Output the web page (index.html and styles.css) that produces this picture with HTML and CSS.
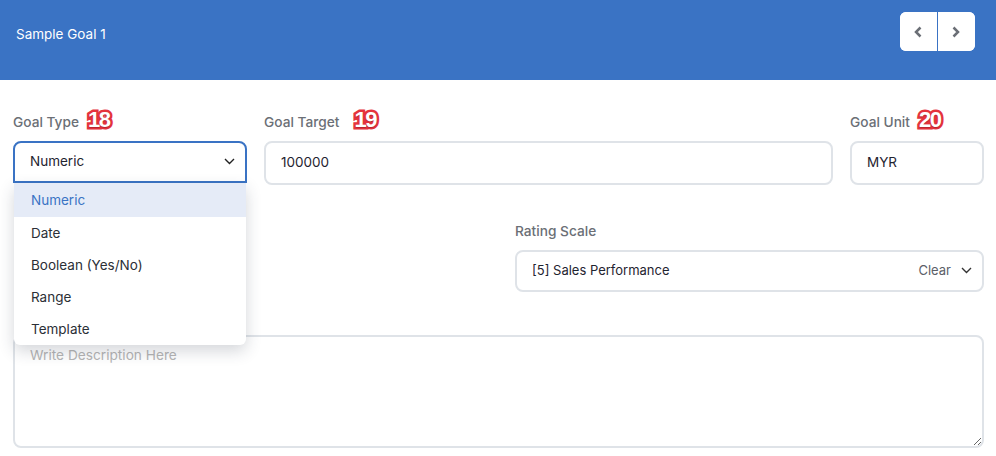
FILE: index.html
```html
<!DOCTYPE html>
<html lang="en">
<head>
<meta charset="utf-8">
<title>Sample Goal 1</title>
<link rel="stylesheet" href="styles.css">
</head>
<body>
<header class="topbar">
  <span class="title">Sample Goal 1</span>
  <div class="pager">
    <button class="page-btn page-prev" aria-label="Previous"><svg width="10" height="12" viewBox="0 0 10 12"><path d="M7.5 1.5 3 6l4.500 4.500" fill="none" stroke="#6b6f76" stroke-width="2.500"/></svg></button>
    <button class="page-btn" aria-label="Next"><svg width="10" height="12" viewBox="0 0 10 12"><path d="M2.500 1.500 7 6l-4.500 4.500" fill="none" stroke="#6b6f76" stroke-width="2.500"/></svg></button>
  </div>
</header>
<main class="form">
  <div class="row row-top">
    <div class="field field-type">
      <div class="label-line"><label class="label">Goal Type</label><span class="badge">18</span></div>
      <div class="control control-focus">
        <span>Numeric</span>
        <svg class="chev" width="11" height="7" viewBox="0 0 11 7"><path d="M1 1l4.500 4.500L10 1" fill="none" stroke="#222" stroke-width="1.400"/></svg>
      </div>
      <ul class="menu">
        <li class="menu-item menu-active">Numeric</li>
        <li class="menu-item">Date</li>
        <li class="menu-item">Boolean (Yes/No)</li>
        <li class="menu-item">Range</li>
        <li class="menu-item">Template</li>
      </ul>
    </div>
    <div class="field field-target">
      <div class="label-line"><label class="label">Goal Target</label><span class="badge badge-wide">19</span></div>
      <div class="control">100000</div>
    </div>
    <div class="field field-unit">
      <div class="label-line"><label class="label">Goal Unit</label><span class="badge">20</span></div>
      <div class="control">MYR</div>
    </div>
  </div>
  <div class="row row-rating">
    <div class="field field-rating">
      <label class="label label-plain">Rating Scale</label>
      <div class="control control-rating">
        <span>[5] Sales Performance</span>
        <span class="actions"><span class="clear">Clear</span><svg width="11" height="7" viewBox="0 0 11 7"><path d="M1 1l4.500 4.500L10 1" fill="none" stroke="#333" stroke-width="1.400"/></svg></span>
      </div>
    </div>
  </div>
  <textarea class="desc" placeholder="Write Description Here"></textarea>
</main>
</body>
</html>
```
FILE: styles.css
```css
* { box-sizing: border-box; }
html, body { margin: 0; height: 456px; overflow: hidden; background: #fff; }
body { font-family: Inter, "Liberation Sans", sans-serif; font-size: 13.5px; color: #1f2430; }
.topbar { height: 80px; background: #3a73c4; display: flex; align-items: flex-start; justify-content: space-between; padding: 12px 21px 0 16px; }
.title { color: #fff; font-size: 13.5px; line-height: 45px; }
.pager { display: flex; height: 39px; background: #fff; border-radius: 6px; overflow: hidden; }
.page-btn { width: 37.5px; border: 0; background: #fff; padding: 0; display: flex; align-items: center; justify-content: center; }
.page-prev { border-right: 1px solid #3a73c4; }
.form { padding: 26px 12px 0 13px; }
.row { display: flex; }
.row-top { gap: 17px; }
.field { position: relative; }
.field-type { width: 234px; }
.field-target { flex: 1; }
.field-unit { width: 134px; }
.label-line { height: 35px; display: flex; align-items: flex-start; }
.label { font-size: 13.7px; font-weight: 500; color: #6b6f76; line-height: 33px; }
.label-plain { display: block; line-height: 18px; margin-bottom: 10px; }
.badge { font-family: "Liberation Sans", sans-serif; font-weight: 700; font-size: 22px; line-height: 28px; color: #fff; margin-left: 9px; letter-spacing: -1.5px; -webkit-text-stroke: 5px #e5343d; paint-order: stroke fill; text-shadow: 0 1px 1px rgba(120, 20, 30, .45); }
.badge-wide { margin-left: 15px; }
.control { height: 44px; border: 2px solid #dfe3e8; border-radius: 8px; background: #fff; display: flex; align-items: center; padding: 0 15px 2px; font-size: 13.5px; color: #1f2430; }
.control-focus { border-color: #3a73c4; justify-content: space-between; height: 42px; border-radius: 8px 8px 0 0; padding: 0 10px 2px 15px; }
.menu { position: absolute; z-index: 2; top: 77px; left: 1px; width: 232px; margin: 0; padding: 0; list-style: none; background: #fff; border-radius: 0 0 6px 6px; box-shadow: 0 6px 16px rgba(40, 50, 70, .2); }
.menu-item { height: 32px; line-height: 32px; padding-left: 17px; font-size: 13.5px; color: #2b2f36; }
.menu-active { height: 34px; line-height: 34px; background: #e5ebf7; color: #3a73c4; }
.row-rating { justify-content: flex-end; margin-top: 37px; }
.field-rating { width: 469px; }
.control-rating { height: 42px; justify-content: space-between; padding: 0 10px 2px 15px; font-size: 13px; }
.actions { display: flex; align-items: center; gap: 10px; }
.clear { color: #5b6068; font-size: 13px; margin-left: -1px; }
.desc { display: block; width: 971px; height: 113px; margin-top: 43px; border: 2px solid #dfe3e8; border-radius: 8px; padding: 10px 15px; font-family: inherit; font-size: 13.7px; outline: 0; background: #fff; }
.desc::placeholder { color: #b5b5b5; }
```
